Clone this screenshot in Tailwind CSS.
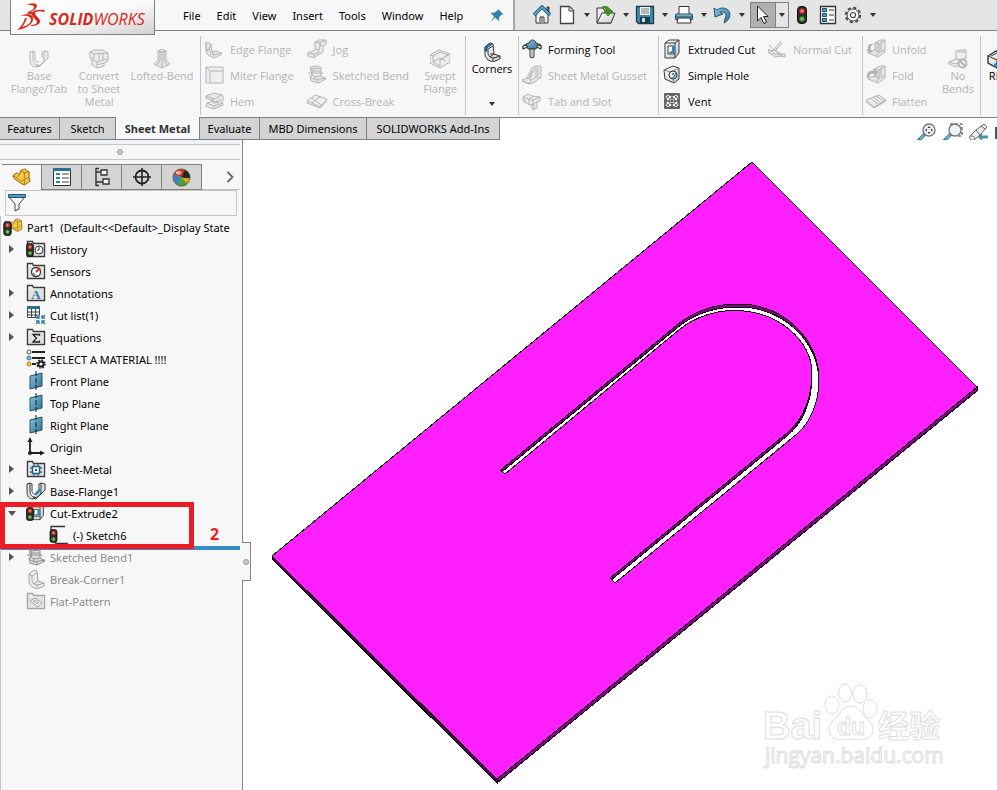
<!DOCTYPE html>
<html lang="en">
<head>
  <meta charset="UTF-8" />
  <meta name="viewport" content="width=device-width, initial-scale=1.0"/>
  <title>SOLIDWORKS - Part1</title>
  <script src="https://cdn.jsdelivr.net/npm/@tailwindcss/browser@4"></script>
</head>
<body class="h-screen flex flex-col overflow-hidden bg-white text-black text-[11px] leading-[13px] font-['Open_Sans','Noto_Sans',sans-serif]">

  <!-- Icon sprite -->
  <svg class="absolute h-0 w-0" aria-hidden="true">
    <linearGradient id="blue" x1="0" y1="0" x2="1" y2="1"><stop offset="0" stop-color="#8cc4dc"/><stop offset="1" stop-color="#2b6f92"/></linearGradient>
    <linearGradient id="metal" x1="0" y1="0" x2="1" y2="1"><stop offset="0" stop-color="#ffffff"/><stop offset="1" stop-color="#c9c9c9"/></linearGradient>
    <symbol id="light" viewBox="0 0 10 18"><rect x=".5" y=".5" width="9" height="17" rx="3.5" fill="#2c2c2c" stroke="#111"/><circle cx="5" cy="5" r="2.8" fill="#d8301c"/><path d="M3.500 5h3M5 3.500v3" stroke="#ff9c8a"/><circle cx="5" cy="13" r="2.800" fill="#3c8a22"/><path d="M3.500 13h3M5 11.500v3" stroke="#9ad884"/></symbol>
    <symbol id="caret" viewBox="0 0 6 4"><path d="M0 0h6L3 4z" fill="#333"/></symbol>
    <symbol id="u-flange" viewBox="0 0 20 20"><path d="M1 3l3-1v8c0 4 2 6 5 6l-2 2C3 18 1 15 1 11zM15 2l4 1v6l-9 9-3-1c4 0 8-3 8-7z" fill="currentColor" fill-opacity=".13" stroke="currentColor"/><path d="M4 2l2 1v7c0 2 2 4 4 3M15 2l-2 1v6" fill="none" stroke="currentColor"/></symbol>
    <symbol id="convert" viewBox="0 0 20 20"><path d="M1 3l4-2h9l5 3v8l-4 2v3l-7 2-5-3V9H1z" fill="currentColor" fill-opacity=".13" stroke="currentColor"/><path d="M1 3l4 2v5M5 5l9-1 5 1M14 4v7l-6 2-5-3M8 13v6M14 11l4-1M10 5v6M8 16l7-2" fill="none" stroke="currentColor"/></symbol>
    <symbol id="loft" viewBox="0 0 20 20"><path d="M6 2l4-2 4 2v9l4 4-8 4-8-4 4-4z" fill="currentColor" fill-opacity=".25" stroke="currentColor"/><path d="M8 2v9l-3 5M10 3v15M12 2v9l3 5M6 2l4 1 4-1" fill="none" stroke="currentColor"/></symbol>
    <symbol id="edge" viewBox="0 0 20 20"><path d="M2 3l5 2 1 8 5-1 5 3-8 4-6-3-2-4z" fill="currentColor" fill-opacity=".2" stroke="currentColor"/><path d="M2 3v8l3-1L7 5M5 10l2 5 4 1 7-3M8 13l3 3M2 11l2 1" fill="none" stroke="currentColor"/></symbol>
    <symbol id="miter" viewBox="0 0 20 20"><path d="M2 2h17v16H2z" fill="currentColor" fill-opacity=".1" stroke="currentColor"/><path d="M6 6h13M6 6v12M2 2l4 4" fill="none" stroke="currentColor"/></symbol>
    <symbol id="hem" viewBox="0 0 20 20"><path d="M2 5l8-3 8 2c2 2 2 5 0 6l1 4-9 4-8-3 1-3 6-2-7-3z" fill="currentColor" fill-opacity=".2" stroke="currentColor"/><path d="M2 5l8 3 8-4M10 8c-3 1-2 3 0 4l7-3M3 12l7 3 9-3M10 15v3M9 10l6 2" fill="none" stroke="currentColor"/></symbol>
    <symbol id="jog" viewBox="0 0 20 20"><path d="M8 3l4-2h7v4l-3 3v5l-4 2-5 4-6-2v-3l7-3V6z" fill="currentColor" fill-opacity=".18" stroke="currentColor"/><path d="M8 3l5 1 6-3M13 4v3l3-1M13 7l-2 7-4 1-6-1M7 15v3M9 10l3 1" fill="none" stroke="currentColor"/></symbol>
    <symbol id="sbend" viewBox="0 0 20 20"><path d="M3 2l8-1 3 2v8l5 3-8 4-7-2-1-5 2-1z" fill="currentColor" fill-opacity=".18" stroke="currentColor"/><path d="M5 4l9-1M5 3v7l3 2 6-1M1 8h15M3 12l5 3 11-2M8 12v3M11 15v3M5 6h9" fill="none" stroke="currentColor"/></symbol>
    <symbol id="cross" viewBox="0 0 20 20"><path d="M0 10l8-6 12 4-7 8z" fill="currentColor" fill-opacity=".13" stroke="currentColor"/><path d="M0 10v2l13 5 7-7V8M5 7l9 7M5 12l9-7" fill="none" stroke="currentColor"/></symbol>
    <symbol id="swept" viewBox="0 0 20 20"><path d="M0 6l9-5 11 4v8l-10 6-10-5z" fill="currentColor" fill-opacity=".13" stroke="currentColor"/><path d="M0 6l3 1 7-4 8 3-8 5M3 7v6l7-4 6 3M10 11v8M3 13l7 4M10 11l10-6" fill="none" stroke="currentColor"/></symbol>
    <symbol id="corner" viewBox="0 0 20 20"><path d="M3 5l5-4 3 1 1 10 6 2v3l-7 3-5-2-3-4z" fill="url(#metal)" stroke="#3b3b3b"/><path d="M6 7l5-3M6 7v5l2 3 4 1 6-2M8 12l4 0M11 16v3M12 12l-4 3" fill="none" stroke="#3b3b3b"/><path d="M3 9V5l5-4 2 1-5 4v3z" fill="#2f86b4" stroke="#1d4d68"/></symbol>
    <symbol id="form" viewBox="0 0 20 20"><path d="M1 10V7l5-3 1 0c1-4 6-4 7 0l5 2v4l-4-2-1 2H6L5 8z" fill="url(#blue)" stroke="#333"/><path d="M1 10V7l4-1v2zM19 10V7l-4-1v2z" fill="#fff" stroke="#333"/><path d="M8 10h4v8l-2 1-2-1z" fill="#ececec" stroke="#333"/><path d="M10 11v7" stroke="#999"/></symbol>
    <symbol id="gusset" viewBox="0 0 20 20"><path d="M0 15l5-2 5-10 4-2h5v11l-8 6-4 1z" fill="currentColor" fill-opacity=".2" stroke="currentColor"/><path d="M5 13l4 2 5-3V1M9 15l-2 4M10 6l-3 7M12 4l-4 9M14 12l5 1M16 3v8M0 15v1l7 3" fill="none" stroke="currentColor"/></symbol>
    <symbol id="tabslot" viewBox="0 0 20 20"><path d="M1 6l5-3 4 2 8 1v4l-3 1v6l-4 2-2-5-3-1-5-3z" fill="currentColor" fill-opacity=".15" stroke="currentColor"/><path d="M1 6l6 2 5-3M7 8v5M7 8l4 1 7-3M11 9v4l4-2M9 14l3-1v5M3 8v3" fill="none" stroke="currentColor"/></symbol>
    <symbol id="cut" viewBox="0 0 20 20"><path d="M3 4l4-3h10v13l-4 5H3z" fill="url(#metal)" stroke="#3b3b3b"/><path d="M3 4h10l4-3M13 4v15" fill="none" stroke="#3b3b3b"/><path d="M6 7h6v8H6z" fill="#fff" stroke="#3b3b3b"/><path d="M7 13l3-1V7h3v6l-5 2z" fill="#2d89b5"/></symbol>
    <symbol id="hole" viewBox="0 0 20 20"><path d="M2 5l9-4 6 2v11l-5 4-9-4z" fill="url(#metal)" stroke="#3b3b3b"/><path d="M2 5l7 2 8-4M9 7l3 11" fill="none" stroke="#888"/><ellipse cx="11" cy="10" rx="4" ry="4" fill="#eee" stroke="#333"/><path d="M13 7a4 4 0 0 1-5 6c3 0 5-3 5-6z" fill="#2d89b5"/><circle cx="11" cy="9" r="1" fill="#2d6a88"/></symbol>
    <symbol id="vent" viewBox="0 0 20 20"><path d="M3 3h14v14H3z" fill="#fff" stroke="#333" stroke-width="1.400"/><circle cx="10" cy="10" r="6" fill="none" stroke="#444" stroke-width=".9"/><circle cx="10" cy="10" r="3.200" fill="none" stroke="#444" stroke-width=".9"/><path d="M10 4v12M4 10h12" stroke="#333"/><path d="M3 3l4 4M17 3l-4 4M3 17l4-4M17 17l-4-4" stroke="#555" stroke-width=".8"/></symbol>
    <symbol id="ncut" viewBox="0 0 20 20"><path d="M2 10l6 5h10v3l-4-1-6 1-7-5z" fill="currentColor" fill-opacity=".3" stroke="currentColor"/><path d="M2 6l13 12M6 12L14 2M8 12l7-8M3 12l5-1 8 5M10 6l2 2M8 8l2 2" fill="none" stroke="currentColor"/></symbol>
    <symbol id="unfold" viewBox="0 0 20 20"><path d="M9 4l5-3h5v12l-7 5-10-4 3-2 4-1z" fill="currentColor" fill-opacity=".25" stroke="currentColor"/><path d="M9 4l4 1 6-4M13 5v8l6-2M9 11l4 2-3 4M11 6v6M15 3v8" fill="none" stroke="currentColor"/><path d="M8 5C3 4 1 7 2 11l-2-1 3 5 4-3-2-1C4 8 5 6 8 5z" fill="currentColor"/></symbol>
    <symbol id="fold" viewBox="0 0 20 20"><path d="M9 4l5-3h5v12l-7 5-10-4 3-2 4-1z" fill="currentColor" fill-opacity=".25" stroke="currentColor"/><path d="M9 4l4 1 6-4M13 5v8l6-2M9 11l4 2-3 4M11 6v6M15 3v8" fill="none" stroke="currentColor"/><path d="M1 13C0 8 3 5 7 6V3l5 4-4 5V9c-3-1-5 1-5 4z" fill="currentColor"/></symbol>
    <symbol id="flatten" viewBox="0 0 20 20"><path d="M0 9l13-5 7 5-12 7z" fill="currentColor" fill-opacity=".13" stroke="currentColor"/><path d="M4 7l8 6M7 6l8 6M10 5l8 5M0 9v2l8 6 12-7V9M8 16v1" fill="none" stroke="currentColor"/></symbol>
    <symbol id="nobend" viewBox="0 0 20 20"><path d="M8 2l4-1h6v9l-5 5-5 3-7-3v-2l7-3z" fill="currentColor" fill-opacity=".13" stroke="currentColor"/><path d="M10 3h8M8 10l5 1 5-3M1 13l7 2 4-2M13 11v3" fill="none" stroke="currentColor"/><circle cx="14.500" cy="14.500" r="4" fill="#f0f0f0" stroke="currentColor" stroke-width="1.800"/><path d="M12 12l5 5" stroke="currentColor" stroke-width="1.800"/></symbol>
    <symbol id="plane" viewBox="0 0 20 20"><path d="M4 5l12-3v13L4 18z" fill="url(#blue)" stroke="#1f5672"/><path d="M10 0v20" stroke="#1d1d1d" stroke-dasharray="5 2"/></symbol>
    <symbol id="folder" viewBox="0 0 20 20"><path d="M1.500 17.500v-15h5l1 2h11v13z" fill="#f1f1f1" stroke="currentColor" stroke-width="1.400"/><path d="M3 6h14v10H3z" fill="#dedede" opacity=".8"/></symbol>
    <symbol id="part" viewBox="0 0 20 20"><path d="M1 8l4-3 3 2 1-4 4-2 5 3v6l1 4-6 4-4-2-7-5z" fill="#f6c944" stroke="#8a6210"/><path d="M1 8l4 2 3-3M5 10l4 4 4-2 5-2M9 3l4 2 5-1M13 5v6M13 12v5" fill="none" stroke="#a57a14"/></symbol>
    <symbol id="mag" viewBox="0 0 20 20"><path d="M8 11l-6 6" stroke="#3c7e9f" stroke-width="3.500" stroke-linecap="round"/><path d="M7 12l-4 4" stroke="#8dc0d8" stroke-width="1.200"/><circle cx="12" cy="7" r="6" fill="#eef4f6" stroke="#777" stroke-width="1.400"/></symbol>
  </svg>

  <!-- Title bar -->
  <header class="relative flex h-[31px] shrink-0 border-b border-[#808080] bg-[#e5e5e5]">
    <div class="absolute left-[10px] top-0 z-10 flex h-[35px] w-[145px] items-center border border-t-0 border-[#808080] bg-linear-to-br from-white via-[#fafafa] to-[#d2d2d2] pl-[5px]">
      <svg class="h-[30px] w-[30px] shrink-0" viewBox="0 0 30 30" fill="#da291c">
        <path d="M11 3c3-2 10-3 10 1 0 2-3 4-6 6 4 0 5 2 2 5 0-3-2-4-6-3l1-2c3-1 6-3 6-5s-4-2-7-2z"/>
        <path d="M4 14c8-3 14-2 13 4-1 5-8 9-16 10 4-3 7-8 8-12l2 0c-1 3-3 7-5 9 5-1 9-4 9-7 0-4-5-5-11-4z"/>
        <path d="M28 10c-4-1-8-1-9 1s6 6 5 9-5 4-9 4l0-1c3 0 6-1 6-3s-6-5-5-9c1-3 6-4 13-3z"/>
      </svg>
      <span class="ml-[3px] pt-[4px] text-[16px] leading-[20px] italic text-[#da291c]"><b>SOLID</b>WORKS</span>
    </div>
    <nav class="ml-[155px] flex w-[360px] shrink-0 items-center gap-[16px] border-r-2 border-[#a8a8a8] bg-[#f7f7f7] pl-[28px] font-['Noto_Sans',sans-serif]">
      <button>File</button><button>Edit</button><button>View</button><button>Insert</button><button>Tools</button><button>Window</button><button>Help</button>
      <button class="ml-auto mr-[8px]" aria-label="Pin menu"><svg class="h-[15px] w-[16px]" viewBox="0 0 16 16"><path d="M9 1l6 6-2 0-3 3 0 4-4-4-5 5 4-6-4-4h4l4-3z" fill="#2f7fa6"/></svg></button>
    </nav>
    <div class="flex items-center pl-[17px]">
      <button aria-label="Home"><svg class="h-[20px] w-[20px]" viewBox="0 0 20 20"><path d="M4 9v9h12V9l-6-6z" fill="#f4f4f4" stroke="#333"/><path d="M8 18v-6h4v6M10 12v6" fill="#fff" stroke="#333"/><path d="M15 2h2v5h-2z" fill="#4a90b2" stroke="#333"/><path d="M2 10l8-8 8 8" fill="none" stroke="#24556e" stroke-width="3.500"/><path d="M2 10l8-8 8 8" fill="none" stroke="#58a3c6" stroke-width="1.800"/></svg></button>
      <button class="ml-[5px]" aria-label="New"><svg class="h-[20px] w-[20px]" viewBox="0 0 20 20"><path d="M3.500 1.500h9l4 4v13h-13z" fill="#fbfbfb" stroke="#444" stroke-width="1.300"/><path d="M12 1.500V6h4.500" fill="#ddd" stroke="#444"/></svg></button>
      <button class="flex w-[19px] justify-center" aria-label="New options"><svg class="h-[4px] w-[6px]"><use href="#caret"/></svg></button>
      <button aria-label="Open"><svg class="h-[20px] w-[20px]" viewBox="0 0 20 20"><path d="M1 18V3h6l1 2h7v13z" fill="#ececec" stroke="#333"/><path d="M1 18L6 8h13l-4 10z" fill="url(#metal)" stroke="#333"/><path d="M6 2c5-2 8 1 8 4h3l-5 5-4-5h3c0-2-2-3-5-4z" fill="#3c9a17" stroke="#256d0b" stroke-width=".6"/></svg></button>
      <button class="flex w-[19px] justify-center" aria-label="Open options"><svg class="h-[4px] w-[6px]"><use href="#caret"/></svg></button>
      <button aria-label="Save"><svg class="h-[20px] w-[20px]" viewBox="0 0 20 20"><path d="M1.500 1.500h17v17h-15l-2-2z" fill="#3f86a8" stroke="#193e50" stroke-width="1.300"/><path d="M5 2h10v8H5z" fill="#f6f6f6"/><path d="M6 4h8M6 6h8M6 8h8" stroke="#777"/><path d="M5 12h10v6H5z" fill="#193e50"/><path d="M7 13h3v4H7z" fill="#c8dbe4"/></svg></button>
      <button class="flex w-[19px] justify-center" aria-label="Save options"><svg class="h-[4px] w-[6px]"><use href="#caret"/></svg></button>
      <button aria-label="Print"><svg class="h-[20px] w-[20px]" viewBox="0 0 20 20"><path d="M5 9V1.500h10V9" fill="#fff" stroke="#333"/><rect x="1.500" y="9" width="17" height="6" rx="1.500" fill="#3f86a8" stroke="#193e50"/><path d="M3 10h14" stroke="#9bd0e8"/><path d="M4 13h12l1 5H3z" fill="#fbfbfb" stroke="#333"/></svg></button>
      <button class="flex w-[19px] justify-center" aria-label="Print options"><svg class="h-[4px] w-[6px]"><use href="#caret"/></svg></button>
      <button aria-label="Undo"><svg class="h-[20px] w-[20px]" viewBox="0 0 20 20"><path d="M1 3l1 9 8-3-3-2c4-1 8 2 5 7l-1 4c8-4 8-14-1-15-3 0-5 1-6 2z" fill="url(#blue)" stroke="#1f5672"/></svg></button>
      <button class="flex w-[17px] justify-center" aria-label="Undo options"><svg class="h-[4px] w-[6px]"><use href="#caret"/></svg></button>
      <div class="flex h-[26px] w-[39px] border border-[#808080]">
        <button class="flex w-[25px] items-center justify-center border-r border-[#808080] bg-[#b0b0b0]" aria-label="Select"><svg class="h-[20px] w-[14px]" viewBox="0 0 14 20"><path d="M1.500 1v15l3.500-3.500 3 6 2.500-1.300-3-5.700H12z" fill="#fff" stroke="#222"/></svg></button>
        <button class="flex w-[12px] items-center justify-center" aria-label="Select options"><svg class="h-[4px] w-[6px]"><use href="#caret"/></svg></button>
      </div>
      <button class="ml-[8px]" aria-label="Rebuild"><svg class="h-[18px] w-[10px]"><use href="#light"/></svg></button>
      <button class="ml-[11px]" aria-label="File properties"><svg class="h-[20px] w-[20px]" viewBox="0 0 20 20"><path d="M2.500 1.500h15v17h-15z" fill="#fff" stroke="#333" stroke-width="1.300"/><path d="M4.500 3.500h4v3h-4zM4.500 8.500h4v3h-4zM4.500 13.500h4v3h-4z" fill="#4aa0cc" stroke="#1d4d68"/><path d="M11 5h5M11 10h5M11 15h5" stroke="#333"/></svg></button>
      <button class="ml-[5px]" aria-label="Options"><svg class="h-[20px] w-[20px]" viewBox="0 0 20 20"><circle cx="10" cy="10" r="7.300" fill="none" stroke="#444" stroke-width="1.800" stroke-dasharray="3.200 2.530"/><circle cx="10" cy="10" r="6" fill="#f5f5f5" stroke="#444"/><circle cx="10" cy="10" r="2.500" fill="#fff" stroke="#444" stroke-width="1.200"/></svg></button>
      <button class="flex w-[19px] justify-center" aria-label="Options list"><svg class="h-[4px] w-[6px]"><use href="#caret"/></svg></button>
    </div>
  </header>

  <!-- Ribbon -->
  <div class="flex h-[87px] shrink-0 overflow-hidden border-b border-[#808080] bg-[#f7f7f7] pt-[5px] pb-[2px] text-[#b4b4b4] [&_button]:text-center [&_svg]:shrink-0">
    <div class="flex w-[201px] shrink-0 items-start border-r border-[#c4c4c4] pt-[13px] pl-[9px]">
      <button class="flex w-[60px] flex-col items-center"><svg class="h-[20px] w-[20px]"><use href="#u-flange"/></svg>Base<br>Flange/Tab</button>
      <button class="flex w-[60px] flex-col items-center"><svg class="h-[20px] w-[20px]"><use href="#convert"/></svg><span>Convert<br>to Sheet<br>Metal</span></button>
      <button class="flex w-[66px] flex-col items-center whitespace-nowrap"><svg class="h-[20px] w-[20px]"><use href="#loft"/></svg>Lofted-Bend</button>
    </div>
    <div class="flex w-[265px] shrink-0 border-r border-[#c4c4c4] pl-[3px]">
      <div class="flex w-[103px] flex-col whitespace-nowrap">
        <button class="flex h-[26px] items-center gap-[6px]"><svg class="h-[20px] w-[20px]"><use href="#edge"/></svg>Edge Flange</button>
        <button class="flex h-[26px] items-center gap-[6px]"><svg class="h-[20px] w-[20px]"><use href="#miter"/></svg>Miter Flange</button>
        <button class="flex h-[26px] items-center gap-[6px]"><svg class="h-[20px] w-[20px]"><use href="#hem"/></svg>Hem</button>
      </div>
      <div class="flex w-[109px] flex-col whitespace-nowrap">
        <button class="flex h-[26px] items-center gap-[6px]"><svg class="h-[20px] w-[20px]"><use href="#jog"/></svg>Jog</button>
        <button class="flex h-[26px] items-center gap-[6px]"><svg class="h-[20px] w-[20px]"><use href="#sbend"/></svg>Sketched Bend</button>
        <button class="flex h-[26px] items-center gap-[6px]"><svg class="h-[20px] w-[20px]"><use href="#cross"/></svg>Cross-Break</button>
      </div>
      <button class="flex w-[50px] flex-col items-center self-start pt-[13px]"><svg class="h-[20px] w-[20px]"><use href="#swept"/></svg><span>Swept<br>Flange</span></button>
    </div>
    <button class="flex w-[53px] shrink-0 flex-col items-center border-r border-[#c4c4c4] pt-[6px] text-black"><svg class="h-[20px] w-[20px]"><use href="#corner"/></svg>Corners<svg class="mt-[27px] h-[4px] w-[6px]"><use href="#caret"/></svg></button>
    <div class="flex w-[140px] shrink-0 flex-col border-r border-[#c4c4c4] pl-[3px] whitespace-nowrap">
      <button class="flex h-[26px] items-center gap-[6px] text-black"><svg class="h-[20px] w-[20px]"><use href="#form"/></svg>Forming Tool</button>
      <button class="flex h-[26px] items-center gap-[6px]"><svg class="h-[20px] w-[20px]"><use href="#gusset"/></svg>Sheet Metal Gusset</button>
      <button class="flex h-[26px] items-center gap-[6px]"><svg class="h-[20px] w-[20px]"><use href="#tabslot"/></svg>Tab and Slot</button>
    </div>
    <div class="flex w-[204px] shrink-0 border-r border-[#c4c4c4] pl-[3px] whitespace-nowrap">
      <div class="flex w-[105px] flex-col text-black">
        <button class="flex h-[26px] items-center gap-[6px]"><svg class="h-[20px] w-[20px]"><use href="#cut"/></svg>Extruded Cut</button>
        <button class="flex h-[26px] items-center gap-[6px]"><svg class="h-[20px] w-[20px]"><use href="#hole"/></svg>Simple Hole</button>
        <button class="flex h-[26px] items-center gap-[6px]"><svg class="h-[20px] w-[20px]"><use href="#vent"/></svg>Vent</button>
      </div>
      <button class="flex h-[26px] items-center gap-[6px]"><svg class="h-[20px] w-[20px]"><use href="#ncut"/></svg>Normal Cut</button>
    </div>
    <div class="flex w-[118px] shrink-0 border-r border-[#c4c4c4] pl-[3px]">
      <div class="flex w-[70px] flex-col">
        <button class="flex h-[26px] items-center gap-[6px]"><svg class="h-[20px] w-[20px]"><use href="#unfold"/></svg>Unfold</button>
        <button class="flex h-[26px] items-center gap-[6px]"><svg class="h-[20px] w-[20px]"><use href="#fold"/></svg>Fold</button>
        <button class="flex h-[26px] items-center gap-[6px]"><svg class="h-[20px] w-[20px]"><use href="#flatten"/></svg>Flatten</button>
      </div>
      <button class="flex w-[44px] flex-col items-center self-start pt-[13px]"><svg class="h-[20px] w-[20px]"><use href="#nobend"/></svg><span>No<br>Bends</span></button>
    </div>
    <button class="flex shrink-0 flex-col self-start pl-[6px] pt-[13px] text-black"><svg class="h-[20px] w-[20px]" viewBox="0 0 20 20"><path d="M1 7l8-5 10 3v9l-9 5-9-5z" fill="url(#metal)" stroke="#333" stroke-width="1.400"/><path d="M1 7l9 4 9-6M10 11v8M4 7l6-3" fill="none" stroke="#333"/><path d="M7 15l5-3v5l-4 2z" fill="#2f86b4"/></svg>Rip</button>
  </div>

  <!-- Command tabs and view toolbar -->
  <div class="flex h-[22px] shrink-0">
    <div class="flex shrink-0 whitespace-nowrap border-b border-[#808080] font-['Noto_Sans',sans-serif] [&_button]:border-r [&_button]:border-[#808080]">
      <button class="w-[60px] bg-[#d4d4d4]">Features</button>
      <button class="w-[56px] bg-[#d4d4d4]">Sketch</button>
      <button class="-mt-px w-[84px] bg-[#f7f7f7] pt-px font-bold text-[#333]">Sheet Metal</button>
      <button class="w-[60px] bg-[#d4d4d4]">Evaluate</button>
      <button class="w-[107px] bg-[#d4d4d4]">MBD Dimensions</button>
      <button class="w-[133px] bg-[#d4d4d4]">SOLIDWORKS Add-Ins</button>
    </div>
    <div class="ml-auto flex shrink-0 gap-[6px] pt-[5px]">
      <button aria-label="Zoom to fit"><svg class="h-[20px] w-[20px]"><use href="#mag"/><path d="M12 3l1.500 2h-3zM12 11l1.500-2h-3zM8 7l2-1.500v3zM16 7l-2-1.500v3z" fill="#333"/></svg></button>
      <button aria-label="Zoom to area"><svg class="h-[20px] w-[20px]"><path d="M7 1h12v12h-6" fill="none" stroke="#333" stroke-dasharray="3 2"/><use href="#mag"/></svg></button>
      <button aria-label="Previous view"><svg class="h-[20px] w-[20px]" viewBox="0 0 20 20"><path d="M1 13l6-6 8-6 3 3-7 8-6 5c-3 1-5-1-4-4z" fill="#ededed" stroke="#666"/><path d="M7 7l4 5M12 3l4 3M2 13c2 0 4 1 4 3" fill="none" stroke="#666"/><path d="M9 14l4-4v2.500h6v3h-6V18z" fill="#4a8fb0"/></svg></button>
      <button class="w-[2px] self-start pt-[4px]" aria-label="Section view"><span class="block h-[12px] bg-[#555]"></span></button>
    </div>
  </div>

  <main class="flex min-h-0 flex-1">
    <!-- Feature manager -->
    <aside class="relative w-[243px] shrink-0 border-r border-[#808080] bg-[#f7f7f7]">
      <div class="mr-[2px] h-[5px] border-b border-[#c4c4c4] bg-[#f0f3f5]"></div>
      <div class="mr-[2px] flex h-[15px] items-center justify-center border-b border-[#c4c4c4]"><span class="h-[6px] w-[6px] rounded-full border border-[#999] bg-[#ccc]"></span></div>
      <div class="mr-[2px] flex h-[30px] pl-[2px] pt-[4px] [&_button]:flex [&_button]:w-[40px] [&_button]:items-center [&_button]:justify-center [&_button]:border-t [&_button]:border-r [&_button]:border-[#808080]">
        <button aria-label="Feature tree"><svg class="h-[19px] w-[19px]"><use href="#part"/></svg></button>
        <button class="border-b bg-[#d4d4d4]" aria-label="Properties"><svg class="h-[20px] w-[20px]" viewBox="0 0 20 20"><path d="M1.500 1.500h17v17h-17z" fill="#fff" stroke="#333"/><path d="M1 1h18v3H1z" fill="#2b6f92"/><path d="M4 7h4M4 11h4M4 15h4" stroke="#2f86b4" stroke-width="2"/><path d="M10 7h7M10 11h7M10 15h7" stroke="#444"/></svg></button>
        <button class="border-b bg-[#d4d4d4]" aria-label="Configurations"><svg class="h-[20px] w-[20px]" viewBox="0 0 20 20"><path d="M4 1v18M4 5h6M4 15h7M4 1.500h3M4 18.500h3" fill="none" stroke="#333" stroke-width="1.400"/><path d="M9 3h6v5H9zM11 12h6v5h-6z" fill="#f4f4f4" stroke="#333" stroke-width="1.300"/></svg></button>
        <button class="border-b bg-[#d4d4d4]" aria-label="Dimensions"><svg class="h-[20px] w-[20px]" viewBox="0 0 20 20"><circle cx="10" cy="10" r="6.500" fill="none" stroke="#222" stroke-width="1.800"/><path d="M10 1v18M1 10h18" stroke="#222" stroke-width="1.600"/></svg></button>
        <button class="border-b bg-[#d4d4d4]" aria-label="Appearances"><svg class="h-[19px] w-[19px]" viewBox="0 0 20 20"><circle cx="10" cy="10" r="9" fill="#f0c31c"/><path d="M10 10L2 6C4 2 8 0 13 2z" fill="#d82b1e"/><path d="M10 10L2 6c-2 5 0 9 4 12z" fill="#3d7fc4"/><path d="M10 10l-4 8c4 2 8 1 10-2z" fill="#45a336"/><path d="M10 10l3-8c4 1 6 5 6 8-1 2-4 1-9 0z" fill="#222"/><path d="M11 10l7 1c0 2-1 4-2 5z" fill="#e9a51a"/><circle cx="10" cy="10" r="9" fill="none" stroke="#444" stroke-width=".8"/><ellipse cx="7" cy="5" rx="3" ry="2" fill="#fff" opacity=".6"/></svg></button>
        <a href="#tree" class="flex flex-1 items-center justify-end border-b border-[#c4c4c4] pr-[6px]" aria-label="More tabs"><svg class="h-[12px] w-[8px]" viewBox="0 0 8 12"><path d="M1.500 1l5 5-5 5" fill="none" stroke="#666" stroke-width="1.800"/></svg></a>
      </div>
      <label class="ml-[5px] mr-[5px] flex h-[26px] items-center border border-[#c4c4c4] pl-[2px]">
        <svg class="h-[20px] w-[18px]" viewBox="0 0 18 20"><path d="M1 4l6 7v7l4-2v-5l6-7z" fill="#f4f4f4" stroke="#444"/><path d="M.5 1.500h17v3H.5z" fill="#4f9cc0" stroke="#1f5672"/></svg>
        <input type="text" aria-label="Filter" class="min-w-0 flex-1 bg-transparent outline-none"/>
      </label>

      <ul id="tree" class="border-l border-[#c4c4c4] whitespace-nowrap pb-[180px] font-['Noto_Sans',sans-serif] [&_svg]:shrink-0 [&_.row]:flex [&_.row]:h-[22px] [&_.row]:items-center [&_.row]:gap-[4px] [&_.row]:pl-[25px]">
        <li class="flex h-[22px] items-center gap-[4px] overflow-hidden pl-[2px]"><svg class="h-[20px] w-[20px]" viewBox="0 0 20 20"><use href="#part" x="5" y="0" width="15" height="17"/><use href="#light" x="0" y="4" width="9" height="15"/></svg><span class="whitespace-pre">Part1  (Default&lt;&lt;Default&gt;_Display State</span></li>
        <li class="row relative"><button class="absolute left-[8px]" aria-label="Expand"><svg class="h-[8px] w-[5px]" viewBox="0 0 5 8"><path d="M0 0l5 4-5 4z" fill="#555"/></svg></button><svg class="h-[20px] w-[20px] text-[#3b3b3b]" viewBox="0 0 20 20"><use href="#folder"/><circle cx="13" cy="11" r="4" fill="#fff" stroke="#333"/><path d="M13 8v3h-2" fill="none" stroke="#333"/><use href="#light" x="0" y="4" width="8" height="14"/></svg>History</li>
        <li class="row"><svg class="h-[20px] w-[20px] text-[#3b3b3b]" viewBox="0 0 20 20"><use href="#folder"/><circle cx="10" cy="11" r="4.500" fill="#fff" stroke="#333" stroke-width="1.300"/><path d="M10 11l4-4" stroke="#d8301c" stroke-width="2"/><path d="M7 12l2 2" stroke="#2f86b4" stroke-width="1.500"/></svg>Sensors</li>
        <li class="row relative"><button class="absolute left-[8px]" aria-label="Expand"><svg class="h-[8px] w-[5px]" viewBox="0 0 5 8"><path d="M0 0l5 4-5 4z" fill="#555"/></svg></button><svg class="h-[20px] w-[20px] text-[#3b3b3b]" viewBox="0 0 20 20"><use href="#folder"/><text x="10" y="16" text-anchor="middle" font-family="Liberation Serif, serif" font-weight="bold" font-size="13" fill="#2b7ba3">A</text></svg>Annotations</li>
        <li class="row relative"><button class="absolute left-[8px]" aria-label="Expand"><svg class="h-[8px] w-[5px]" viewBox="0 0 5 8"><path d="M0 0l5 4-5 4z" fill="#555"/></svg></button><svg class="h-[20px] w-[20px]" viewBox="0 0 20 20"><path d="M1.500 1.500h12v11h-12z" fill="#fff" stroke="#444"/><path d="M1 1h13v3H1z" fill="#2b6f92"/><path d="M1 7h13M1 10h13M5.500 4v9M9.500 4v9" stroke="#444"/><path d="M10 10h9v9h-9z" fill="#f7f7f7"/><path d="M10 10l3 3M19 10l-3 3M10 19l3-3M19 19l-3-3M13 10v3h-3M16 10v3h3M10 16h3v3M19 16h-3v3" fill="none" stroke="#2b7ba3" stroke-width="1.300"/></svg>Cut list(1)</li>
        <li class="row relative"><button class="absolute left-[8px]" aria-label="Expand"><svg class="h-[8px] w-[5px]" viewBox="0 0 5 8"><path d="M0 0l5 4-5 4z" fill="#555"/></svg></button><svg class="h-[20px] w-[20px] text-[#3b3b3b]" viewBox="0 0 20 20"><use href="#folder"/><path d="M13.500 9V7.500H7l3.500 3.800L7 15h6.500v-1.500" fill="none" stroke="#222" stroke-width="1.300"/></svg>Equations</li>
        <li class="row"><svg class="h-[20px] w-[20px]" viewBox="0 0 20 20"><path d="M6 3h13M6 9h13M6 15h4" stroke="#222" stroke-width="1.800"/><circle cx="3" cy="3" r="2" fill="#eee" stroke="#555"/><circle cx="3" cy="9" r="2" fill="#7cc0e4" stroke="#2b6f92"/><circle cx="3" cy="15" r="2" fill="#f7c61c" stroke="#a87c0c"/><circle cx="15" cy="15" r="2.600" fill="none" stroke="#222" stroke-width="2"/><circle cx="15" cy="15" r="4" fill="none" stroke="#222" stroke-width="1.500" stroke-dasharray="1.640 1.500"/></svg>SELECT A MATERIAL !!!!</li>
        <li class="row"><svg class="h-[20px] w-[20px]"><use href="#plane"/></svg>Front Plane</li>
        <li class="row"><svg class="h-[20px] w-[20px]"><use href="#plane"/></svg>Top Plane</li>
        <li class="row"><svg class="h-[20px] w-[20px]"><use href="#plane"/></svg>Right Plane</li>
        <li class="row"><svg class="h-[20px] w-[20px]" viewBox="0 0 20 20"><path d="M4 3v13h12" fill="none" stroke="#222" stroke-width="1.800"/><path d="M1.500 5L4 0l2.500 5zM14 13.500l5 2.500-5 2.500z" fill="#222"/><circle cx="4" cy="16" r="2" fill="#222"/></svg>Origin</li>
        <li class="row relative"><button class="absolute left-[8px]" aria-label="Expand"><svg class="h-[8px] w-[5px]" viewBox="0 0 5 8"><path d="M0 0l5 4-5 4z" fill="#555"/></svg></button><svg class="h-[20px] w-[20px] text-[#3b3b3b]" viewBox="0 0 20 20"><use href="#folder"/><path d="M6.500 7.500h7v7h-7z" fill="#fff" stroke="#1f5672" stroke-width="1.500"/><path d="M8 5v3M12 5v3M8 14v3M12 14v3M4 9h3M4 13h3M13 9h3M13 13h3" stroke="#2b6f92" stroke-width="1.300"/><path d="M9 10h2v2H9z" fill="#1f5672"/></svg>Sheet-Metal</li>
        <li class="row relative"><button class="absolute left-[8px]" aria-label="Expand"><svg class="h-[8px] w-[5px]" viewBox="0 0 5 8"><path d="M0 0l5 4-5 4z" fill="#555"/></svg></button><svg class="h-[20px] w-[20px] text-[#3b3b3b]" viewBox="0 0 20 20"><use href="#u-flange"/><path d="M9 12l5-5 1 3-5 5z" fill="#2f86b4"/></svg>Base-Flange1</li>
        <li class="relative">
          <div class="row relative"><button class="absolute left-[7px]" aria-label="Collapse"><svg class="h-[5px] w-[8px]" viewBox="0 0 8 5"><path d="M0 0h8L4 5z" fill="#555"/></svg></button><svg class="h-[20px] w-[20px]" viewBox="0 0 20 20"><use href="#cut" x="3" y="0" width="17" height="18"/><use href="#light" x="0" y="4" width="8" height="14"/></svg>Cut-Extrude2</div>
          <ul>
            <li class="flex h-[22px] items-center gap-[4px] pl-[48px]"><svg class="h-[20px] w-[20px]" viewBox="0 0 20 20"><path d="M2 5V1.500h14M6 18.500h13" fill="none" stroke="#333" stroke-width="1.300"/><use href="#light" x="0" y="4" width="9" height="14"/></svg>(-) Sketch6</li>
          </ul>
          <!-- Callout around the cut feature -->
          <div class="absolute -left-px top-0 z-10 h-[47px] w-[194px] border-5 border-[#ee1c25]"></div>
          <span class="absolute left-[209px] top-[22px] text-[16px] leading-[20px] font-bold text-[#ee1c25]">2</span>
          <div class="absolute left-0 right-[2px] top-[44px] h-[4px] bg-[#3a8cc6]"></div>
        </li>
        <li class="row relative text-[#8c8c8c]"><button class="absolute left-[8px]" aria-label="Expand"><svg class="h-[8px] w-[5px]" viewBox="0 0 5 8"><path d="M0 0l5 4-5 4z" fill="#555"/></svg></button><svg class="h-[20px] w-[20px]"><use href="#sbend"/></svg>Sketched Bend1</li>
        <li class="row text-[#8c8c8c]"><svg class="h-[20px] w-[20px] text-[#a4a4a4]" viewBox="0 0 20 20"><path d="M3 5l5-4 3 1 1 10 6 2v3l-7 3-5-2-3-4z" fill="#ececec" stroke="currentColor"/><path d="M6 7l5-3M6 7v5l2 3 4 1 6-2M11 16v3M12 12l-4 3M3 5l3 2" fill="none" stroke="currentColor"/></svg>Break-Corner1</li>
        <li class="row text-[#8c8c8c]"><svg class="h-[20px] w-[20px] text-[#a4a4a4]" viewBox="0 0 20 20"><use href="#folder"/><path d="M4 10l5-3 7 5-4 4z" fill="#f4f4f4" stroke="currentColor"/><path d="M7 10l2-1 4 3-2 1z" fill="none" stroke="currentColor"/></svg>Flat-Pattern</li>
      </ul>
      <button class="absolute -right-[9px] top-[402px] z-10 flex h-[39px] w-[9px] items-center justify-center border border-l-0 border-[#808080] bg-[#f7f7f7]" aria-label="Resize panel"><span class="h-[6px] w-[6px] rounded-full border border-[#999] bg-[#ccc]"></span></button>
    </aside>

    <!-- Graphics area -->
    <section class="min-w-0 flex-1 bg-white">
      <svg class="h-full w-full" viewBox="243 140 754 650">
        <defs>
          <path id="slot" d="M500.500 470L677 325C695 310 716 304 738 304C783 304 819 338 819 380C819 401 811 422 797 434L615 583L610 578L787 433C803 420 812 398 812 373C812 340 777 310 733 310.500C715 311 697 316 680 329L505 474Z"/>
          <clipPath id="slotClip"><use href="#slot"/></clipPath>
        </defs>
        <g shape-rendering="crispEdges" stroke="#000">
          <path d="M497 779L977 387V391L497 783Z" fill="#8f0090"/>
          <path d="M272 556L497 779V783L272 559Z" fill="#5a005a"/>
          <path d="M752 162L977 387L497 779L272 556Z" fill="#ff1fff"/>
          <use href="#slot" fill="#8f0090"/>
          <g clip-path="url(#slotClip)"><use href="#slot" y="3" fill="#fff"/></g>
          <use href="#slot" fill="none"/>
        </g>
        <!-- Watermark -->
        <g fill="#fff" stroke="#dedede" font-family="Open Sans, Noto Sans CJK SC, sans-serif">
          <text x="763" y="739" font-size="38" font-weight="bold" font-family="Liberation Sans, sans-serif">Bai</text>
          <ellipse cx="832" cy="705" rx="7" ry="9"/><ellipse cx="845" cy="693" rx="6.500" ry="9"/><ellipse cx="860" cy="694" rx="7" ry="9"/><ellipse cx="870" cy="709" rx="7" ry="9"/>
          <path d="M851 706c8 0 10 7 15 12 5 4 9 10 6 16-3 7-12 6-21 5-9 1-18 2-21-5-3-6 1-12 6-16 5-5 7-12 15-12z"/>
          <text x="837" y="735" font-size="23" font-weight="bold" font-family="Liberation Sans, sans-serif">du</text>
          <text x="878" y="737" font-size="31" font-weight="bold" font-family="Noto Sans CJK SC, sans-serif">经验</text>
          <text x="765" y="763" font-size="21">jingyan.baidu.com</text>
        </g>
      </svg>
    </section>
  </main>

</body>
</html>
